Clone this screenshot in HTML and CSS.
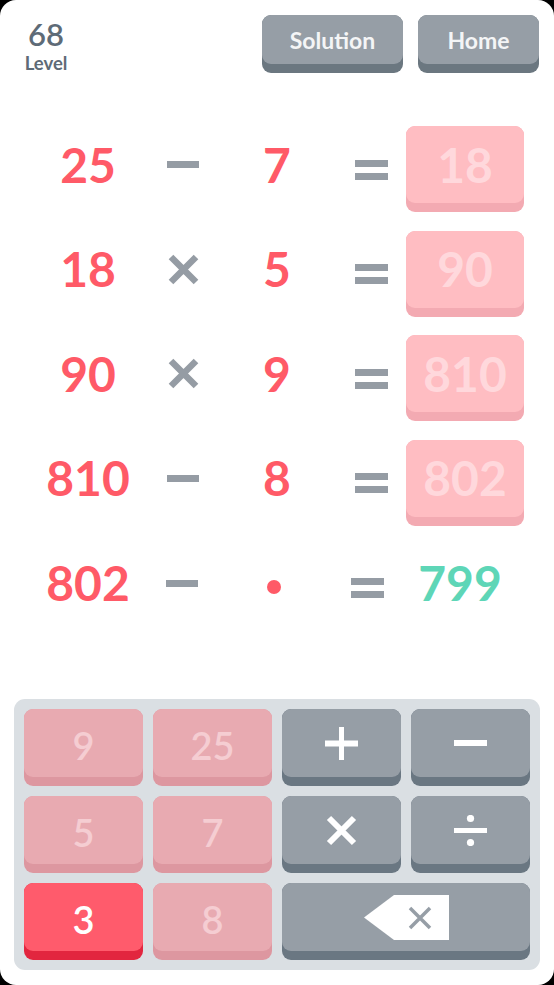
FILE: index.html
```html
<!DOCTYPE html>
<html lang="en">
<head>
<meta charset="utf-8">
<title>Math Puzzle - Level 68</title>
<link rel="stylesheet" href="styles.css">
</head>
<body>
<div class="screen">
  <header class="top">
    <div class="level">
      <div class="level-num">68</div>
      <div class="level-label">Level</div>
    </div>
    <div class="top-actions">
      <button class="btn btn-solution"><span class="face">Solution</span></button>
      <button class="btn btn-home"><span class="face">Home</span></button>
    </div>
  </header>

  <main class="eqs">
    <div class="eq">
      <div class="cell num">25</div>
      <div class="cell op"><svg width="32" height="7" viewBox="0 0 32 7"><rect width="32" height="7" fill="#959ca4"/></svg></div>
      <div class="cell num">7</div>
      <div class="cell eqsign"><svg width="33" height="20" viewBox="0 0 33 20"><rect y="0" width="33" height="7" fill="#959ca4"/><rect y="13" width="33" height="7" fill="#959ca4"/></svg></div>
      <div class="res"><span class="res-face">18</span></div>
    </div>
    <div class="eq">
      <div class="cell num">18</div>
      <div class="cell op"><svg width="31" height="31" viewBox="0 0 31 31"><path d="M3 3 L28 28 M28 3 L3 28" stroke="#959ca4" stroke-width="6.5"/></svg></div>
      <div class="cell num">5</div>
      <div class="cell eqsign"><svg width="33" height="20" viewBox="0 0 33 20"><rect y="0" width="33" height="7" fill="#959ca4"/><rect y="13" width="33" height="7" fill="#959ca4"/></svg></div>
      <div class="res"><span class="res-face">90</span></div>
    </div>
    <div class="eq">
      <div class="cell num">90</div>
      <div class="cell op"><svg width="31" height="31" viewBox="0 0 31 31"><path d="M3 3 L28 28 M28 3 L3 28" stroke="#959ca4" stroke-width="6.5"/></svg></div>
      <div class="cell num">9</div>
      <div class="cell eqsign"><svg width="33" height="20" viewBox="0 0 33 20"><rect y="0" width="33" height="7" fill="#959ca4"/><rect y="13" width="33" height="7" fill="#959ca4"/></svg></div>
      <div class="res"><span class="res-face">810</span></div>
    </div>
    <div class="eq">
      <div class="cell num">810</div>
      <div class="cell op"><svg width="32" height="7" viewBox="0 0 32 7"><rect width="32" height="7" fill="#959ca4"/></svg></div>
      <div class="cell num">8</div>
      <div class="cell eqsign"><svg width="33" height="20" viewBox="0 0 33 20"><rect y="0" width="33" height="7" fill="#959ca4"/><rect y="13" width="33" height="7" fill="#959ca4"/></svg></div>
      <div class="res"><span class="res-face">802</span></div>
    </div>
    <div class="eq eq-last">
      <div class="cell num">802</div>
      <div class="cell op"><svg width="32" height="7" viewBox="0 0 32 7"><rect width="32" height="7" fill="#959ca4"/></svg></div>
      <div class="cell slot"><span class="dot"></span></div>
      <div class="cell eqsign"><svg width="33" height="20" viewBox="0 0 33 20"><rect y="0" width="33" height="7" fill="#959ca4"/><rect y="13" width="33" height="7" fill="#959ca4"/></svg></div>
      <div class="cell target">799</div>
    </div>
  </main>

  <section class="pad">
    <button class="key key-used"><span class="face">9</span></button>
    <button class="key key-used"><span class="face">25</span></button>
    <button class="key key-op"><span class="face"><svg width="33" height="33" viewBox="0 0 33 33"><rect x="14" y="0" width="5" height="33" fill="#fff"/><rect x="0" y="13.5" width="33" height="6" fill="#fff"/></svg></span></button>
    <button class="key key-op"><span class="face"><svg width="33" height="6" viewBox="0 0 33 6"><rect width="33" height="6" fill="#fff"/></svg></span></button>

    <button class="key key-used"><span class="face">5</span></button>
    <button class="key key-used"><span class="face">7</span></button>
    <button class="key key-op"><span class="face"><svg width="31" height="31" viewBox="0 0 31 31"><path d="M3 3 L28 28 M28 3 L3 28" stroke="#fff" stroke-width="6"/></svg></span></button>
    <button class="key key-op"><span class="face"><svg width="33" height="31" viewBox="0 0 33 31"><circle cx="16.5" cy="3.5" r="3.6" fill="#fff"/><rect x="0" y="13" width="33" height="5" fill="#fff"/><circle cx="16.5" cy="27.5" r="3.6" fill="#fff"/></svg></span></button>

    <button class="key key-active"><span class="face">3</span></button>
    <button class="key key-used"><span class="face">8</span></button>
    <button class="key key-op key-wide"><span class="face"><svg width="85" height="45" viewBox="0 0 85 45"><polygon points="0,22.5 30,0 85,0 85,45 30,45" fill="#fff"/><path d="M46 13 L66 33 M66 13 L46 33" stroke="#969ea6" stroke-width="3.5"/></svg></span></button>
  </section>
</div>
</body>
</html>
```

FILE: styles.css
```css
* { box-sizing: border-box; }

html, body {
  margin: 0;
  padding: 0;
  background: #000;
}

.screen {
  width: 554px;
  height: 985px;
  background: #fff;
  border-radius: 16px;
  display: flex;
  flex-direction: column;
  font-family: "Lato", "Liberation Sans", sans-serif;
  overflow: hidden;
}

/* header */
.top {
  display: flex;
  justify-content: space-between;
  align-items: flex-start;
  padding: 15px 15px 0 23px;
  height: 73px;
}

.level {
  width: 46px;
  margin-top: 4px;
  text-align: center;
  color: #5e6b77;
}

.level-num {
  font-size: 31px;
  line-height: 31px;
  font-weight: 600;
}

.level-label {
  margin-top: 4px;
  font-size: 18.5px;
  line-height: 18px;
  font-weight: 700;
}

.top-actions {
  display: flex;
  gap: 15px;
}

.btn, .key {
  border: 0;
  margin: 0;
  padding: 0 0 9px 0;
  border-radius: 9px;
  font-family: inherit;
  display: flex;
  flex-direction: column;
  cursor: pointer;
}

.face {
  flex: 1;
  display: flex;
  align-items: center;
  justify-content: center;
  border-radius: 9px;
}

.btn {
  height: 58px;
  background: #6b7780;
}

.btn .face {
  background: #969ea6;
  color: #f4f5f6;
  font-size: 23px;
  font-weight: 700;
}

.btn-solution { width: 141px; }
.btn-home { width: 121px; }

/* equations */
.eqs {
  margin-top: 53px;
  padding-left: 40px;
  display: flex;
  flex-direction: column;
  gap: 18.67px;
}

.eq {
  display: grid;
  grid-template-columns: 96px 94px 94px 82px 118px;
  height: 86px;
  align-items: start;
}

.eq-last {
  grid-template-columns: 96px 92px 92px 78px 124px;
}

.cell {
  height: 77px;
  display: flex;
  align-items: center;
  justify-content: center;
  font-size: 48px;
  line-height: 48px;
  font-weight: 700;
}

.num { color: #ff5a67; }

.eqsign {
  justify-content: flex-end;
  padding-right: 18px;
  padding-top: 10px;
}

.eq-last .eqsign { padding-right: 14px; }

.slot { padding-top: 8px; }

.dot {
  width: 14px;
  height: 14px;
  border-radius: 50%;
  background: #ff5a67;
}

.target { color: #5ed6b7; }

.res {
  height: 86px;
  border-radius: 9px;
  background: #f3aab2;
  padding-bottom: 9px;
  display: flex;
}

.res-face {
  flex: 1;
  border-radius: 9px;
  background: #ffbdc2;
  color: #ffd8dc;
  display: flex;
  align-items: center;
  justify-content: center;
  font-size: 48px;
  line-height: 48px;
  font-weight: 700;
}

/* keypad */
.pad {
  margin: auto 14px 15px 14px;
  background: #dadfe3;
  border-radius: 11px;
  padding: 10px;
  display: grid;
  grid-template-columns: repeat(4, 119px);
  grid-auto-rows: 77px;
  gap: 10px;
}

.key .face {
  font-size: 38px;
  line-height: 38px;
  font-weight: 600;
  padding-top: 3px;
}

.key-used { background: #dd97a0; }
.key-used .face { background: #e8aab1; color: #f5cdd2; }

.key-active { background: #e2263f; }
.key-active .face { background: #ff5b6c; color: #fff; }

.key-op { background: #6a7782; }
.key-op .face { background: #969ea6; color: #fff; padding-top: 0; }

.key-wide { grid-column: span 2; }
```
